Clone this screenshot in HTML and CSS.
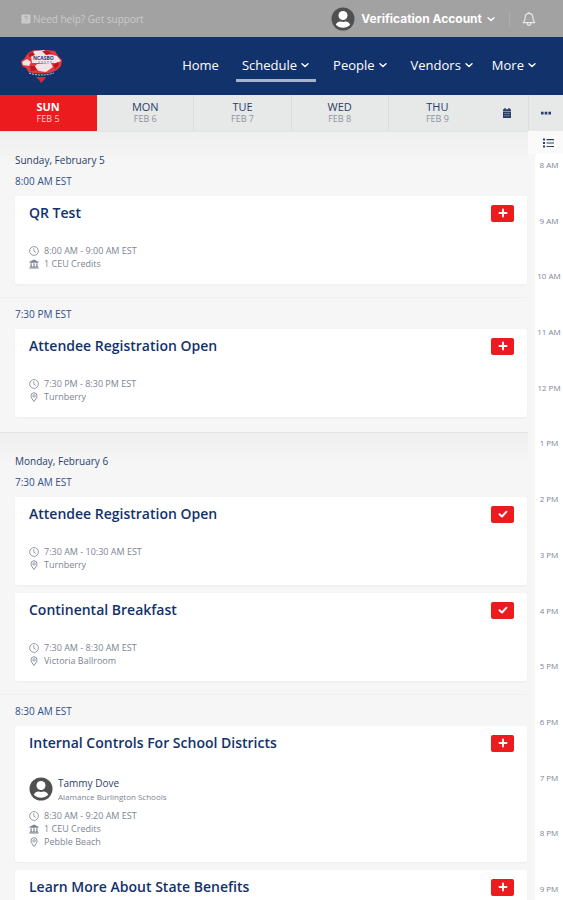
FILE: index.html
```html
<!DOCTYPE html>
<html lang="en">
<head>
<meta charset="utf-8">
<meta name="viewport" content="width=device-width, initial-scale=1">
<title>Schedule</title>
<link rel="stylesheet" href="styles.css">
</head>
<body>
<svg class="sprite" aria-hidden="true">
  <symbol id="chevron" viewBox="0 0 10 10"><path d="M2 3.700 5 6.500 8 3.700" fill="none" stroke="currentColor" stroke-width="1.400" stroke-linecap="round" stroke-linejoin="round"/></symbol>
  <symbol id="user" viewBox="0 0 24 24"><circle cx="12" cy="12" r="11.500" fill="currentColor"/><circle cx="12" cy="8.500" r="4.500" fill="#fff"/><path d="M4.800 17.800c1-3 3.700-3.500 4.700-3.300 1.600.6 3.400.6 5 0 1-.2 3.700.3 4.700 3.300-3.800 4-10.600 4-14.400 0z" fill="#fff"/></symbol>
  <symbol id="clock" viewBox="0 0 10 10"><g fill="none" stroke="currentColor"><circle cx="5" cy="5" r="4.400" stroke-width=".8"/><path d="M4.800 2.300V5.200L6.900 6.500" stroke-width=".8"/></g></symbol>
  <symbol id="credits" viewBox="0 0 10 10"><path d="M5 .6 9.500 2.700V3.700H.5V2.700zM1.500 4.200H2.700V7.500H1.500zM4.400 4.200H5.600V7.500H4.400zM7.300 4.200H8.500V7.500H7.300zM.9 7.500H9.100V8.300H.9zM.3 8.600H9.700V9.500H.3z" fill="currentColor"/></symbol>
  <symbol id="pin" viewBox="0 0 10 10"><path d="M5 9.500C3.500 7.400 2 5.800 2 3.900a3 3.200 0 0 1 6 0C8 5.800 6.500 7.400 5 9.500z" fill="none" stroke="currentColor" stroke-width=".9"/><circle cx="5" cy="3.900" r="1.200" fill="none" stroke="currentColor" stroke-width=".8"/></symbol>
  <symbol id="plus" viewBox="0 0 10 10"><path d="M5 1.500V8.500M1.500 5H8.500" stroke="currentColor" stroke-width="1.900" stroke-linecap="round"/></symbol>
  <symbol id="check" viewBox="0 0 10 10"><path d="M1.500 5.200 4 7.500 8.500 2.700" fill="none" stroke="currentColor" stroke-width="1.900" stroke-linecap="round" stroke-linejoin="round"/></symbol>
</svg>

<div class="app">
  <header>
    <div class="topbar">
      <a class="help" href="#">
        <svg class="icon" viewBox="0 0 10 10" aria-hidden="true"><rect x=".5" y=".5" width="9" height="9" rx="1" fill="currentColor"/><path d="M3.500 3.700C3.600 1.800 6.600 2 6.500 3.600 6.500 4.600 5 4.600 5 5.900M5 7V8" fill="none" stroke="#a2a2a2"/></svg>
        Need help? Get support
      </a>
      <button class="account" type="button">
        <svg class="avatar" aria-hidden="true"><use href="#user"/></svg>
        <span>Verification Account</span>
        <svg class="icon" aria-hidden="true"><use href="#chevron"/></svg>
      </button>
      <button class="bell" type="button" aria-label="Notifications">
        <svg viewBox="0 0 14 16" aria-hidden="true"><path d="M7 1V2.300M7 2.300C4.500 2.300 3.200 4.200 3.200 6.300 3.200 9.500 2.300 10.300 1.200 11.600H12.800C11.700 10.300 10.800 9.500 10.800 6.300 10.800 4.200 9.500 2.300 7 2.300zM5.300 12.600C5.500 15 8.500 15 8.700 12.600" fill="none" stroke="currentColor" stroke-width="1.200" stroke-linecap="round" stroke-linejoin="round"/></svg>
      </button>
    </div>
    <div class="navbar">
      <a class="logo" href="#" aria-label="Home page">
        <svg viewBox="0 0 44 36" aria-hidden="true">
          <path d="M1 13 4 11 8 5 14 2 21 3 27 2 35 3 38 8 42 12 41 18 37 22 31 25 23 27 17 27 9 25 6 20 2 18z" fill="#df3942"/>
          <path d="M14 3 24 2 29 6 37 8 41 13 36 15 12 15 11 8zM2 14 7 11 11 14 9 18 3 17zM17 16 31 15 33 19 26 24 19 23 14 19z" fill="#f6e3e6"/>
          <path d="M8 6 13 4 15 7 10 9zM10 18 15 18 17 22 11 23zM22 3 28 3 32 6 26 7zM33 17 38 14 39 17 35 21z" fill="#c7131d"/>
          <path d="M8 24Q21 27 35 24L33 28Q21 30 10 28z" fill="#12326b"/>
          <path d="M9 25Q21 29 34 25" fill="none" stroke="#cbd5e6" stroke-dasharray="2 1"/>
          <path d="M16 29H26L24 32 21 35 19 32z" fill="#d62b35"/>
          <path d="M18 14H33" stroke="#8291b5" stroke-dasharray="2 1"/>
          <text class="logo-text" x="13" y="12">NCASBO</text>
        </svg>
      </a>
      <nav class="menu" aria-label="Main">
        <a class="menu-item" href="#">Home</a>
        <button class="menu-item current" type="button">Schedule <svg class="icon" aria-hidden="true"><use href="#chevron"/></svg></button>
        <button class="menu-item" type="button">People <svg class="icon" aria-hidden="true"><use href="#chevron"/></svg></button>
        <button class="menu-item" type="button">Vendors <svg class="icon" aria-hidden="true"><use href="#chevron"/></svg></button>
      </nav>
      <button class="menu-item more" type="button">More <svg class="icon" aria-hidden="true"><use href="#chevron"/></svg></button>
    </div>
    <div class="days">
      <button class="day selected" type="button"><b>SUN</b><span>FEB 5</span></button>
      <button class="day" type="button"><b>MON</b><span>FEB 6</span></button>
      <button class="day" type="button"><b>TUE</b><span>FEB 7</span></button>
      <button class="day" type="button"><b>WED</b><span>FEB 8</span></button>
      <button class="day" type="button"><b>THU</b><span>FEB 9</span></button>
      <button class="tool" type="button" aria-label="Pick a date">
        <svg class="icon" viewBox="0 0 10 10" aria-hidden="true"><path d="M1 1.200H2.300V0H3.600V1.200H6.400V0H7.700V1.200H9V3H1zM1 3.500H9V10H1z" fill="currentColor"/><path d="M2.500 5.500H7.500M2.500 7.700H7.500" stroke="#9da7b8" stroke-width=".9" stroke-dasharray="1.200 .7"/></svg>
      </button>
      <button class="tool options" type="button" aria-label="More options">
        <svg class="icon" viewBox="0 0 10 10" aria-hidden="true"><path d="M0 3.800H2.600V6.400H0zM3.700 3.800H6.300V6.400H3.700zM7.400 3.800H10V6.400H7.400z" fill="currentColor"/></svg>
      </button>
    </div>
  </header>

  <div class="body">
    <main class="agenda">
      <section class="date">
        <h2>Sunday, February 5</h2>
        <div class="slot">
          <h3>8:00 AM EST</h3>
          <article class="card">
            <div class="card-head"><h4>QR Test</h4><button class="toggle" type="button" aria-label="Add"><svg class="icon" aria-hidden="true"><use href="#plus"/></svg></button></div>
            <ul class="meta">
              <li><svg class="icon" aria-hidden="true"><use href="#clock"/></svg>8:00 AM - 9:00 AM EST</li>
              <li><svg class="icon" aria-hidden="true"><use href="#credits"/></svg>1 CEU Credits</li>
            </ul>
          </article>
        </div>
        <div class="slot">
          <h3>7:30 PM EST</h3>
          <article class="card">
            <div class="card-head"><h4>Attendee Registration Open</h4><button class="toggle" type="button" aria-label="Add"><svg class="icon" aria-hidden="true"><use href="#plus"/></svg></button></div>
            <ul class="meta">
              <li><svg class="icon" aria-hidden="true"><use href="#clock"/></svg>7:30 PM - 8:30 PM EST</li>
              <li><svg class="icon" aria-hidden="true"><use href="#pin"/></svg>Turnberry</li>
            </ul>
          </article>
        </div>
      </section>
      <section class="date">
        <h2>Monday, February 6</h2>
        <div class="slot">
          <h3>7:30 AM EST</h3>
          <article class="card">
            <div class="card-head"><h4>Attendee Registration Open</h4><button class="toggle" type="button" aria-label="Remove"><svg class="icon" aria-hidden="true"><use href="#check"/></svg></button></div>
            <ul class="meta">
              <li><svg class="icon" aria-hidden="true"><use href="#clock"/></svg>7:30 AM - 10:30 AM EST</li>
              <li><svg class="icon" aria-hidden="true"><use href="#pin"/></svg>Turnberry</li>
            </ul>
          </article>
          <article class="card">
            <div class="card-head"><h4>Continental Breakfast</h4><button class="toggle" type="button" aria-label="Remove"><svg class="icon" aria-hidden="true"><use href="#check"/></svg></button></div>
            <ul class="meta">
              <li><svg class="icon" aria-hidden="true"><use href="#clock"/></svg>7:30 AM - 8:30 AM EST</li>
              <li><svg class="icon" aria-hidden="true"><use href="#pin"/></svg>Victoria Ballroom</li>
            </ul>
          </article>
        </div>
        <div class="slot">
          <h3>8:30 AM EST</h3>
          <article class="card">
            <div class="card-head"><h4>Internal Controls For School Districts</h4><button class="toggle" type="button" aria-label="Add"><svg class="icon" aria-hidden="true"><use href="#plus"/></svg></button></div>
            <div class="speaker">
              <svg class="avatar" aria-hidden="true"><use href="#user"/></svg>
              <div><p class="name">Tammy Dove</p><p class="org">Alamance Burlington Schools</p></div>
            </div>
            <ul class="meta">
              <li><svg class="icon" aria-hidden="true"><use href="#clock"/></svg>8:30 AM - 9:20 AM EST</li>
              <li><svg class="icon" aria-hidden="true"><use href="#credits"/></svg>1 CEU Credits</li>
              <li><svg class="icon" aria-hidden="true"><use href="#pin"/></svg>Pebble Beach</li>
            </ul>
          </article>
          <article class="card">
            <div class="card-head"><h4>Learn More About State Benefits</h4><button class="toggle" type="button" aria-label="Add"><svg class="icon" aria-hidden="true"><use href="#plus"/></svg></button></div>
          </article>
        </div>
      </section>
    </main>
    <aside class="rail">
      <button class="list-view" type="button" aria-label="List view">
        <svg viewBox="0 0 12 10" aria-hidden="true"><path d="M0 .5H2V2.500H0zM0 4H2V6H0zM0 7.500H2V9.500H0zM3.500 1H11V2.200H3.500zM3.500 4.400H11V5.600H3.500zM3.500 7.900H11V9.100H3.500z" fill="currentColor"/></svg>
      </button>
      <ol class="hours">
        <li>8 AM</li><li>9 AM</li><li>10 AM</li><li>11 AM</li><li>12 PM</li><li>1 PM</li><li>2 PM</li><li>3 PM</li><li>4 PM</li><li>5 PM</li><li>6 PM</li><li>7 PM</li><li>8 PM</li><li>9 PM</li>
      </ol>
    </aside>
  </div>
</div>
</body>
</html>
```
FILE: styles.css
```css
:root {
  --navy: #12326b;
  --ink: #293f69;
  --muted: #7c8595;
  --red: #ec1b1e;
}

* {
  box-sizing: border-box;
  margin: 0;
  padding: 0;
}

body {
  font-family: "Open Sans", "Noto Sans", sans-serif;
  color: var(--ink);
  background: #f6f6f6;
}

button {
  font: inherit;
  color: inherit;
  background: none;
  border: 0;
  cursor: pointer;
}

a {
  color: inherit;
  text-decoration: none;
}

ul,
ol {
  list-style: none;
}

svg {
  display: block;
  flex: none;
}

.sprite {
  position: absolute;
  width: 0;
  height: 0;
}

.icon {
  width: 10px;
  height: 10px;
}

.avatar {
  width: 24px;
  height: 24px;
  color: #505050;
}

.app {
  display: flex;
  flex-direction: column;
  height: 100vh;
  overflow: hidden;
}

.topbar {
  display: flex;
  align-items: center;
  height: 37px;
  padding-left: 21px;
  background: #a2a2a2;
}

.help {
  display: flex;
  align-items: center;
  gap: 2px;
  margin-right: auto;
  font-size: 10px;
  color: #cbcbcb;
}

.account {
  display: flex;
  align-items: center;
  gap: 6px;
  padding-right: 13px;
  font-family: Inter, sans-serif;
  font-size: 12px;
  font-weight: 700;
  color: #fff;
}

.account .icon {
  margin-left: -2px;
}

.bell {
  display: flex;
  justify-content: center;
  width: 54px;
  padding-right: 15px;
  border-left: 1px solid #acacac;
  color: #e8e8e8;
}

.bell svg {
  width: 14px;
  height: 16px;
}

.navbar {
  display: flex;
  align-items: center;
  height: 58px;
  padding: 0 20px;
  background: var(--navy);
  color: #fff;
}

.logo svg {
  width: 44px;
  height: 36px;
}

.logo-text {
  font-family: "Open Sans", sans-serif;
  font-size: 5px;
  font-weight: 700;
  fill: #20386f;
}

.menu {
  display: flex;
  gap: 11px;
  margin-left: auto;
}

.menu-item {
  display: flex;
  align-items: center;
  gap: 3px;
  height: 32px;
  padding: 0 6px;
  border-bottom: 3px solid transparent;
  font-size: 13px;
  font-weight: 500;
}

.menu-item.current {
  border-color: #a6b4d2;
}

.more {
  margin-left: 6px;
}

.days {
  display: grid;
  grid-template-columns: repeat(5, 1fr) 42px 35px;
  height: 36px;
  background: #e7e8e8;
}

.day {
  display: flex;
  flex-direction: column;
  align-items: center;
  justify-content: center;
  border-right: 1px solid #dcdede;
}

.day:nth-child(5) {
  border-right: 0;
}

.day b {
  font-size: 11px;
  line-height: 12px;
  font-weight: 500;
}

.day span {
  font-size: 9px;
  line-height: 12px;
  color: #8d94a0;
}

.day.selected {
  border-color: var(--red);
  background: var(--red);
  color: #fff;
}

.day.selected b {
  font-weight: 700;
}

.day.selected span {
  color: #ffd0d0;
}

.tool {
  display: grid;
  place-items: center;
}

.options {
  border-left: 1px solid #dcdede;
}

.body {
  display: flex;
  flex: 1;
  min-height: 0;
}

.agenda {
  flex: 1;
  min-width: 0;
  overflow: hidden;
}

.date {
  padding: 18px 1px 2px 0;
  border-top: 1px solid #e2e3e3;
  background: linear-gradient(#efefef, #f6f6f6 32px);
}

h2,
h3 {
  padding-left: 15px;
  font-size: 10px;
  line-height: 20px;
  font-weight: 400;
}

h2 {
  margin-bottom: 1px;
  font-weight: 500;
}

h3 {
  margin-bottom: 5px;
  color: #30508c;
}

.slot {
  padding-bottom: 13px;
}

.slot + .slot {
  padding-top: 6px;
  border-top: 1px solid #f1f1f1;
}

.card {
  margin-left: 15px;
  padding: 7px 13px 14px 14px;
  border-radius: 2px;
  background: #fff;
  box-shadow: 0 1px 2px #ececec;
}

.card + .card {
  margin-top: 8px;
}

.card-head {
  display: flex;
  align-items: center;
  justify-content: space-between;
  margin-bottom: 21px;
}

h4 {
  font-size: 14px;
  line-height: 20px;
  font-weight: 600;
  color: var(--navy);
}

.toggle {
  display: grid;
  place-items: center;
  width: 23px;
  height: 17px;
  border-radius: 2px;
  background: var(--red);
  color: #fff;
}

.meta li {
  display: flex;
  align-items: center;
  gap: 5px;
  font-size: 9px;
  line-height: 13px;
  color: var(--muted);
}

.speaker {
  display: flex;
  gap: 5px;
  margin: -18px 0 6px;
  padding-top: 21px;
}

.name,
.org {
  line-height: 13px;
}

.name {
  font-size: 10px;
  font-weight: 500;
}

.org {
  font-size: 8px;
  color: var(--muted);
}

.rail {
  display: flex;
  flex-direction: column;
  width: 35px;
}

.list-view {
  display: grid;
  place-items: center;
  height: 23px;
  padding-left: 6px;
  background: #fafafa;
}

.list-view svg {
  width: 12px;
  height: 10px;
}

.hours {
  display: flex;
  flex: 1;
  flex-direction: column;
  justify-content: space-between;
  margin-left: 7px;
  padding: 5px 0;
  border-top-left-radius: 3px;
  background: #fff;
  font-size: 8px;
  line-height: 12px;
  text-align: center;
  color: var(--muted);
}
```
